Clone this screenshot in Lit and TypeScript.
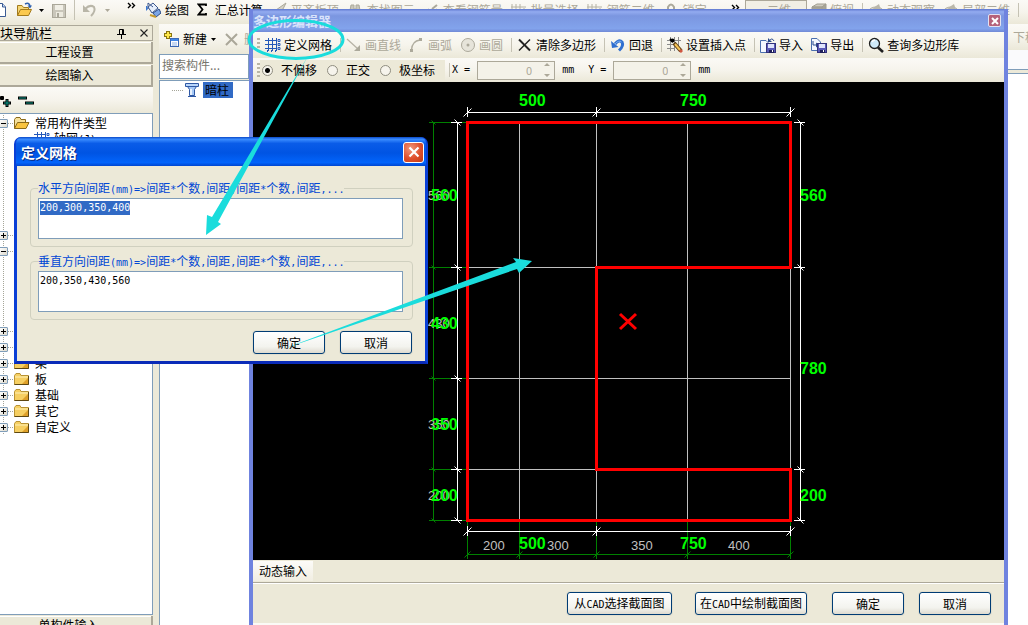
import { LitElement, html, svg, css, nothing } from "lit";
import { customElement, query } from "lit/decorators.js";
import { classMap } from "lit/directives/class-map.js";

/* ---------- shared look ---------- */

const base = css`
  * { box-sizing: border-box; }
  button, input, select, textarea, label, legend { font: inherit; color: inherit; }
  button { border: 0; background: none; padding: 0; margin: 0; }
  svg { display: block; flex: none; }
  .half { font-family: "DejaVu Sans Mono", monospace; font-size: 10px; white-space: pre; }
  .bar {
    display: flex;
    align-items: center;
    white-space: nowrap;
    background: linear-gradient(#fbfaf6, #f6f4ec 50%, #ebe8d8);
  }
  .tool { display: flex; align-items: center; gap: 3px; padding: 0 4px; flex: none; white-space: nowrap; }
  .tool:disabled { color: #aca899; }
  .sep { width: 1px; height: 14px; background: #c5c2b4; margin: 0 1px 0 4px; flex: none; }
  .grip { width: 3px; height: 14px; flex: none; background: repeating-linear-gradient(#b9b6a6 0 2px, transparent 2px 4px); }
  .push {
    height: 23px;
    border: 1px solid #003c74;
    border-radius: 3px;
    background: linear-gradient(#fff, #f3f3ee 70%, #dedbd0);
    color: #000;
    text-align: center;
    line-height: 20px;
    white-space: nowrap;
    box-shadow: 0 0 0 1px #e2dfcf;
  }
  .push.std { width: 72px; }
`;

/* Latin runs take half the width of a Chinese character. */
const mixed = (text: string) =>
  text.split(/([\x20-\x7e]+)/).map((part) =>
    /^[\x20-\x7e]+$/.test(part) ? html`<span class="half">${part}</span>` : part || nothing
  );

/* ---------- icons ---------- */

const box = (body: unknown, w = 16, h = 16) =>
  html`<svg width=${w} height=${h} viewBox="0 0 ${w} ${h}" aria-hidden="true">${body}</svg>`;

const disk = (x: number, y: number) => svg`
  <rect x=${x + 0.5} y=${y + 0.5} width="9" height="9" fill="#5a5ab8" stroke="#33337c"/>
  <rect x=${x + 2} y=${y + 1} width="6" height="4" fill="#dfe4fb"/>
  <rect x=${x + 3} y=${y + 7} width="5" height="3" fill="#20205a"/>
  <rect x=${x + 6} y=${y + 7} width="1" height="2" fill="#fff"/>`;

const icons = {
  doc: box(svg`<path d="M-6 1.500H2.500L5.500 5V14.500H-6Z" fill="#fff" stroke="#3a5a94"/><path d="M2.500 1.500V5H5.500" fill="#c9dbf5" stroke="#3a5a94"/>`, 7),
  open: box(svg`<path d="M1.500 13.500V3.500H6L7.500 5.500H12.500V8" fill="#f5d676" stroke="#a27a1c"/><path d="M1.500 13.500L4.500 7.500H15.500L12.500 13.500Z" fill="#fbc94f" stroke="#a27a1c"/><path d="M9 2Q13 0 14 4" fill="none" stroke="#2c5fae" stroke-width="1.500"/><path d="M11.500 3.500H16L14 6.500Z" fill="#2c5fae"/>`),
  save: box(svg`<rect x="1.500" y="2.500" width="13" height="13" fill="#c9c6ba" stroke="#aaa799"/><rect x="4" y="3" width="8" height="5" fill="#f1efe6"/><rect x="5" y="10" width="7" height="5" fill="#eceadf"/><rect x="6" y="11" width="2" height="4" fill="#aaa799"/>`),
  undoOff: box(svg`<path d="M3 7Q8 2 12 5Q14 9 9 14" fill="none" stroke="#b9b6a8" stroke-width="2"/><path d="M1 3V10H8Z" fill="#b9b6a8"/>`),
  undo: box(svg`<path d="M5 7Q9 2 12 5Q14 9 9 13.500" fill="none" stroke="#2f6fd0" stroke-width="3"/><path d="M5 7Q9 2.500 11.500 5" fill="none" stroke="#7eb0f0"/><path d="M1 4L2 11L8.500 10Z" fill="#2f6fd0"/>`),
  paint: box(svg`<path d="M3 5L8 1L13 6L7 11Z" fill="#e6eefb" stroke="#39548c"/><path d="M3 1V7M3 1L8 5" stroke="#39548c" fill="none"/><path d="M1 4V9L3 7L2 4Z" fill="#3d77cf"/><path d="M8 11L14 7L16 11L11 15Z" fill="#7ca6e6" stroke="#294a88"/><path d="M5 13L11 15" stroke="#c79a2c" stroke-width="2"/>`),
  sigma: box(svg`<path d="M9 4V2.500H1.500L5.500 7.500L1.500 12.500H9V11" fill="none" stroke="#000" stroke-width="1.800"/>`, 11),
  grid: box(svg`<path d="M3.500 1V14M7.500 1V14M11.500 1V14M0 3.500H12M0 7.500H12M0 11.500H12" stroke="#2458b8"/><path d="M13 2.500H15V4.500H13ZM13 6.500H15V8.500H13ZM13 10.500H15V12.500H13ZM2.500 13V15M6.500 13V15M10.500 13V15" stroke="#2458b8" fill="none"/>`),
  line: box(svg`<path d="M1 2L12 12" stroke="#b5b2a4" stroke-width="1.200"/><path d="M14 14H8L14 8Z" fill="#aca99b"/>`),
  arc: box(svg`<path d="M2.500 13Q3 4 11 3" fill="none" stroke="#b0ad9f" stroke-width="1.300"/><rect x="1" y="12" width="3" height="3" fill="#aca99b"/><rect x="10" y="1" width="3" height="3" fill="#aca99b"/>`),
  circle: box(svg`<circle cx="8" cy="8" r="6.500" fill="#e6e4da" stroke="#aca99b"/><circle cx="8" cy="8" r="1.500" fill="#aca99b"/>`),
  clear: box(svg`<path d="M2 2.500L13 13.500" stroke="#222" stroke-width="2"/><path d="M13 2.500L2 13.500" stroke="#222" stroke-width="1.500"/>`),
  insert: box(svg`<path d="M3.500 0V14M7.500 0V14M11.500 0V9M0 3.500H14M0 7.500H10M0 11.500H8" stroke="#8b8b8b"/><path d="M3 2L6 5" stroke="#000" stroke-width="2"/><circle cx="5.500" cy="3.500" r="2" fill="#000"/><path d="M7 6L14 14" stroke="#5c3d12" stroke-width="4"/><path d="M8 7L13 13" stroke="#f6c557" stroke-width="2"/><path d="M13 13L15 15" stroke="#cf5640" stroke-width="3"/>`),
  import: box(svg`<path d="M0.500 3.500H6L9.500 7V15.500H0.500Z" fill="#f4f8ff" stroke="#4b6fae"/>${disk(6, 6)}<path d="M9 4Q12 0 14 4" fill="none" stroke="#2a4a8c"/><path d="M8 1V5H12Z" fill="#2a4a8c"/>`),
  export: box(svg`<path d="M0.500 1.500H6L9.500 5V13.500H0.500Z" fill="#f4f8ff" stroke="#4b6fae"/><path d="M2 4V8H5" stroke="#2a4a8c" fill="none"/><path d="M5 5.500V10.500L8 8Z" fill="#2a4a8c"/>${disk(6, 6)}`),
  search: box(svg`<circle cx="6.500" cy="6.500" r="5" fill="#cfeaf9" stroke="#1f1f1f" stroke-width="1.300"/><path d="M4 5Q5 3 7 3" stroke="#fff" fill="none" stroke-width="1.500"/><path d="M10 10.500L15 15" stroke="#1f1f1f" stroke-width="2.600"/>`),
  create: box(svg`<path d="M5 0V8M1 4H9" stroke="#8a7510" stroke-width="4"/><path d="M5 1V7M2 4H8" stroke="#ffe84a" stroke-width="2"/><rect x="7.500" y="7.500" width="8" height="8" fill="#fff" stroke="#3a68b4"/><rect x="8" y="8" width="7" height="2" fill="#3f86e8"/><path d="M9 12H14M9 14H14" stroke="#8fb3e6"/>`),
  remove: box(svg`<path d="M2 3L13 14M13 3L2 14" stroke="#aaa799" stroke-width="2"/>`),
  column: box(svg`<path d="M1.500 1.500H14.500V4.500H1.500Z" fill="#b9d6fb" stroke="#2f58a4"/><path d="M3.500 4.500H12.500L10.500 7.500V13.500H5.500V7.500Z" fill="#a5c8f6" stroke="#2f58a4"/><path d="M7 7V13" stroke="#fff" stroke-width="1.500"/><path d="M4 14.500H12" stroke="#2f58a4"/>`),
  slab: box(svg`<path d="M1 13L5 8L15 1L12 7Z" fill="#d5d2c6" stroke="#aca99b"/>`),
  find: box(svg`<path d="M2 14L4 3H7V14ZM9 14V3H12L14 14Z" fill="#c9c6ba" stroke="#aca99b"/><path d="M7 7H9" stroke="#aca99b"/>`),
  rebar: box(svg`<path d="M2 12L6 7M9 7L14 3M11 12L14 7" stroke="#aca99b" stroke-width="2"/>`),
  mesh: box(svg`<path d="M1 2V14M5 2V14M9 2V14M0 5H15M0 9H15M13 6V12" stroke="#b5b2a4"/>`),
  lock: box(svg`<path d="M5 8V5Q8 0 11 5V8" fill="none" stroke="#aca99b" stroke-width="2"/><rect x="3" y="7" width="10" height="7" fill="#c9c6ba"/>`),
  cube: box(svg`<path d="M1 5L6 2H15L11 5Z" fill="#cfccc0" stroke="#a19e90"/><path d="M1 5H11V13H1ZM11 5L15 2V10L11 13" fill="#a8a598" stroke="#a19e90"/>`),
  orbit: box(svg`<ellipse cx="8" cy="9" rx="7" ry="4" fill="#d9d6ca" stroke="#b5b2a4"/><path d="M5 6L11 2L13 8L8 12Z" fill="#bab7aa"/>`),
  pin: box(svg`<path d="M3.500 1.500H7.500V6.500H3.500ZM6.500 1.500V6M1 6.500H10M5.500 7V11" fill="none" stroke="#000"/>`, 11, 11),
  shut: box(svg`<path d="M1.500 1.500L8.500 8.500M8.500 1.500L1.500 8.500" stroke="#222" stroke-width="1.100"/>`, 10, 10),
  folder: box(svg`<path d="M0.500 11.500V2.500L2 0.500H6L7 2.500H14.500V11.500Z" fill="#f6cf62" stroke="#b99334"/><path d="M1 4H14" stroke="#fdf0b8"/><path d="M0.500 11.500H14.500V3" fill="none" stroke="#5d4712"/><path d="M8 11L14 5V11Z" fill="#dea02a"/>`, 15, 13),
  folderOpen: box(svg`<path d="M0.500 11.500V2.500L2 0.500H6L7 2.500H11.500V5" fill="#f6e09a" stroke="#8a6a1a"/><path d="M0.500 11.500L3.500 5.500H15L12 11.500Z" fill="#f9c440" stroke="#8a6a1a"/>`, 16, 13),
  caret: box(svg`<path d="M0 0H5L2.500 3Z" fill="currentColor"/>`, 5, 3),
  chevrons: box(svg`<path d="M1 1L3.500 3.500L1 6M5 1L7.500 3.500L5 6" fill="none" stroke="#000" stroke-width="1.400"/>`, 9, 7),
};

/* ---------- drawing area ---------- */

@customElement("section-canvas")
class SectionCanvas extends LitElement {
  static styles = [base, css`
    :host { display: block; background: #000; overflow: hidden; }
    .major { font: bold 16px "Liberation Sans", sans-serif; fill: #0f0; }
    .minor { font: 13px "Liberation Sans", sans-serif; fill: #c0c0c0; }
    .grid { stroke: #c0c0c0; }
    .ext { stroke: #008000; }
    .dim { stroke: #fff; }
    .outline { fill: none; stroke: #f00; stroke-width: 3; }
  `];

  private xs = [467, 519, 596, 687, 790];
  private ys = [122, 267, 378, 469, 520];

  private hLine(x1: number, x2: number, y: number, cls: string) {
    return svg`<line class=${cls} x1=${x1} x2=${x2} y1=${y + 0.5} y2=${y + 0.5}/>`;
  }
  private vLine(x: number, y1: number, y2: number, cls: string) {
    return svg`<line class=${cls} x1=${x + 0.5} x2=${x + 0.5} y1=${y1} y2=${y2}/>`;
  }
  private slash(x: number, y: number, dir: 1 | -1, r: number, cls: string) {
    return svg`<line class=${cls} x1=${x + 0.5 - r} y1=${y + 0.5 - r * dir} x2=${x + 0.5 + r} y2=${y + 0.5 + r * dir}/>`;
  }
  private rowDim(y: number) {
    return svg`${this.hLine(467, 791, y, "dim")}
      ${[467, 596, 790].map((x) => svg`${this.vLine(x, y - 5, y + 5, "dim")}${this.slash(x, y, -1, 4, "dim")}`)}`;
  }
  private colDim(x: number, stops: number[]) {
    return svg`${this.vLine(x, 122, 521, "dim")}
      ${stops.map((y) => svg`${this.hLine(x - 6, x + 5, y, "dim")}${this.slash(x, y, 1, 3, "dim")}`)}`;
  }
  private text(cls: string, items: [number, number, number][]) {
    return items.map(([n, x, y]) => svg`<text class=${cls} x=${x} y=${y}>${n}</text>`);
  }

  render() {
    const { xs, ys } = this;
    return html`<svg width="751" height="478" viewBox="253 82 751 478" role="img" aria-label="截面图">
      ${xs.slice(1).map((x) => this.vLine(x, 122, 520, "grid"))}
      ${ys.slice(1, 4).map((y) => this.hLine(467, 790, y, "grid"))}
      ${ys.map((y) => svg`${this.hLine(429, 467, y, "ext")}${this.slash(433, y, 1, 2, "ext")}`)}
      ${this.vLine(433, 122, 520, "ext")}
      ${xs.map((x) => svg`${this.vLine(x, 521, 559, "ext")}${this.slash(x, 554, -1, 3, "ext")}`)}
      ${this.hLine(467, 790, 554, "ext")}
      ${this.text("minor", [[560, 428, 200], [430, 428, 328], [350, 428, 429], [200, 428, 500],
        [200, 483, 550], [300, 547, 550], [350, 631, 550], [400, 728, 550]])}
      ${this.rowDim(112)}${this.rowDim(531)}
      ${this.colDim(457, ys)}${this.colDim(800, [122, 267, 469, 520])}
      ${this.text("major", [[500, 519, 106], [750, 680, 106], [500, 519, 549], [750, 680, 549],
        [560, 431, 201], [430, 431, 329], [350, 431, 430], [200, 431, 501],
        [560, 800, 201], [780, 800, 374], [200, 800, 501]])}
      <path class="outline" d="M467.500 122.500H790.500V267.500H596.500V469.500H790.500V520.500H467.500Z"/>
      <path class="outline" d="M620 314L636 329M636 314L620 329"/>
    </svg>`;
  }
}

/* ---------- polygon editor window ---------- */

@customElement("polygon-editor")
class PolygonEditor extends LitElement {
  static styles = [base, css`
    :host {
      display: flex;
      flex-direction: column;
      border: solid #6f83df;
      border-width: 0 4px;
      background: #ece9d8;
    }
    .title {
      height: 23px;
      flex: none;
      display: flex;
      align-items: center;
      justify-content: space-between;
      padding-right: 3px;
      background: linear-gradient(#5f78cf, #93abf0 12%, #7b96e0 30%, #82a3ec 85%, #7189d6);
      color: #d9e3fb;
      font-size: 13px;
      font-weight: bold;
    }
    .close {
      width: 13px;
      height: 13px;
      display: grid;
      place-items: center;
      border: 1px solid #e3e2f2;
      border-radius: 2px;
      background: #b5627a;
    }
    .tools { height: 26px; flex: none; padding-left: 4px; }
    .grid-tool { padding-left: 5px; }
    .modes { height: 24px; flex: none; padding-left: 4px; }
    .radios { display: flex; align-items: center; gap: 10px; height: 20px; padding: 0 10px 0 2px; background: #ece9d8; }
    .radio { display: flex; align-items: center; gap: 8px; }
    .radio input {
      appearance: none;
      width: 11px;
      height: 11px;
      margin: 0;
      border: 1px solid #8f8d80;
      border-radius: 50%;
      background: #f6f4ec;
    }
    .radio input:checked { background: radial-gradient(#000 0 2px, #f6f4ec 3px); }
    .axis { display: flex; align-items: center; gap: 7px; padding: 0 13px 0 1px; }
    .spin { display: flex; align-items: center; width: 78px; height: 19px; padding-right: 4px; border: 1px solid #aca899; background: #f4f2e9; color: #aca899; }
    .spin input {
      appearance: textfield;
      flex: 1;
      min-width: 0;
      border: 0;
      padding: 0 12px 0 0;
      background: none;
      color: #aca899;
      text-align: right;
      font-size: 11px;
    }
    section-canvas { flex: 1; min-height: 0; }
    .status { height: 23px; flex: none; padding: 1px 1px 2px 0; border-bottom: 1px solid #aca899; }
    .tab { height: 20px; padding: 0 6px; background: linear-gradient(#fcfbf8, #f1eee2); }
    .foot { height: 40px; flex: none; display: flex; align-items: center; justify-content: flex-end; padding: 0 13px 0 0; border-top: 1px solid #fff; gap: 23px; }
    .pair { display: flex; gap: 15px; margin-left: 2px; }
    .wide { padding: 0 4px; min-width: 105px; }
    .strip { height: 2px; flex: none; background: #fbfaf6; }
  `];

  private tool(icon: unknown, label: string, off = false) {
    return html`<button class="tool" ?disabled=${off}>${icon}${label}</button>`;
  }
  private axis(name: string) {
    return html`<span class="axis">
      <label for=${name} class="half">${name} =</label>
      <span class="spin"><input id=${name} type="text" inputmode="numeric" value="0" disabled />
        ${box(svg`<path d="M0 4H6L3 1ZM0 12H6L3 15Z" fill="#aca899"/>`, 6)}</span>
      <span class="half">mm</span></span>`;
  }

  render() {
    const sep = html`<span class="sep"></span>`;
    return html`
      <div class="title"><span>多边形编辑器</span>
        <button class="close" aria-label="关闭">${box(svg`<path d="M1 1L7 7M7 1L1 7" stroke="#fff" stroke-width="2"/>`, 8, 8)}</button>
      </div>
      <div class="bar tools"><span class="grip"></span>
        <button class="tool grid-tool">${icons.grid}定义网格</button>${sep}
        ${this.tool(icons.line, "画直线", true)}${this.tool(icons.arc, "画弧", true)}${this.tool(icons.circle, "画圆", true)}${sep}
        ${this.tool(icons.clear, "清除多边形")}${sep}${this.tool(icons.undo, "回退")}${sep}
        ${this.tool(icons.insert, "设置插入点")}${sep}
        ${this.tool(icons.import, "导入")}${this.tool(icons.export, "导出")}${sep}
        ${this.tool(icons.search, "查询多边形库")}
      </div>
      <div class="bar modes"><span class="grip"></span>
        <span class="radios">${["不偏移", "正交", "极坐标"].map((t, i) => html`
          <label class="radio"><input type="radio" name="mode" .checked=${i === 0} />${t}</label>`)}</span>
        <span class="sep"></span>${this.axis("X")}${this.axis("Y")}
      </div>
      <section-canvas></section-canvas>
      <div class="status"><button class="tab">动态输入</button></div>
      <div class="foot">
        <button class="push wide">${mixed("从CAD选择截面图")}</button>
        <button class="push wide">${mixed("在CAD中绘制截面图")}</button>
        <span class="pair"><button class="push std">确定</button><button class="push std">取消</button></span>
      </div>
      <div class="strip"></div>`;
  }
}

/* ---------- grid definition dialog ---------- */

@customElement("grid-dialog")
class GridDialog extends LitElement {
  static styles = [base, css`
    :host {
      display: block;
      border: 3px solid #0a3fd6;
      border-top: 0;
      border-bottom-color: #0a2bb8;
      border-radius: 7px 7px 0 0;
      background: #0a50e0;
    }
    .title {
      height: 29px;
      display: flex;
      align-items: center;
      justify-content: space-between;
      padding: 1px 2px 0 5px;
      margin: 0 -1px;
      border-radius: 6px 6px 0 0;
      background: linear-gradient(#0a49c8, #3a8cff 8%, #0a5ce8 22%, #0054e3 55%, #0264fb 88%, #0046d0);
      color: #fff;
      font-size: 14px;
      font-weight: bold;
      text-shadow: 1px 1px #0a2a80;
    }
    .close {
      width: 21px;
      height: 21px;
      display: grid;
      place-items: center;
      border: 1px solid #fff;
      border-radius: 3px;
      background: radial-gradient(circle at 35% 30%, #f0987c, #df4f2c 55%, #c13a14);
    }
    .body { background: #ece9d8; padding: 15px 12px 7px 13px; }
    fieldset { margin: 0 0 7px; padding: 3px 9px 7px 7px; border: 1px solid #d0d0bf; border-radius: 4px; min-width: 0; }
    legend { display: block; padding: 0; height: 14px; line-height: 14px; color: #0046d5; white-space: nowrap; }
    textarea {
      display: block;
      width: 100%;
      height: 41px;
      resize: none;
      outline: 0;
      margin: 0;
      padding: 2px 1px;
      border: 1px solid #7f9db9;
      border-radius: 0;
      background: #fff;
      color: #000;
      font: 10px/14px "DejaVu Sans Mono", monospace;
      overflow: hidden;
    }
    textarea::selection { background: #316ac5; color: #fff; }
    .actions { display: flex; justify-content: flex-end; gap: 15px; padding: 4px 1px 0 0; }
  `];

  @query("#across") private across!: HTMLTextAreaElement;

  firstUpdated() {
    this.across.focus();
    this.across.select();
  }

  private field(id: string, name: string, value: string) {
    return html`<fieldset>
      <legend><label for=${id}>${mixed(`${name}方向间距(mm)=>间距*个数,间距,间距*个数,间距,...`)}</label></legend>
      <textarea id=${id} spellcheck="false" .value=${value}></textarea>
    </fieldset>`;
  }

  render() {
    return html`
      <div class="title"><span>定义网格</span>
        <button class="close" aria-label="关闭">${box(svg`<path d="M1.500 1.500L10.500 10.500M10.500 1.500L1.500 10.500" stroke="#fff" stroke-width="2.200"/>`, 12, 12)}</button>
      </div>
      <div class="body">
        ${this.field("across", "水平", "200,300,350,400")}
        ${this.field("down", "垂直", "200,350,430,560")}
        <div class="actions"><button class="push std">确定</button><button class="push std">取消</button></div>
      </div>`;
  }
}

/* ---------- whole desktop ---------- */

type Row = { open?: boolean; mark?: boolean; label?: string; child?: boolean };

const rows: Row[] = [
  { mark: true, open: true, label: "常用构件类型" },
  { child: true, label: "轴网(J)" },
  {}, {}, {}, {}, {},
  { mark: true }, { mark: true, open: true },
  {}, {}, {}, {},
  { mark: true }, { mark: true },
  { mark: true, label: "梁" },
  { mark: true, label: "板" },
  { mark: true, label: "基础" },
  { mark: true, label: "其它" },
  { mark: true, label: "自定义" },
];

@customElement("app-root")
class AppRoot extends LitElement {
  static styles = [base, css`
    :host {
      display: flex;
      flex-direction: column;
      position: relative;
      height: 100vh;
      overflow: hidden;
      background: #ece9d8;
      color: #000;
      font: 12px/16px "Noto Sans CJK SC", sans-serif;
    }
    .main-bar { height: 24px; flex: none; padding-bottom: 4px; }
    .group { display: flex; align-items: center; flex: none; }
    .files { width: 141px; gap: 7px; }
    .files .sep { margin: 0; height: 20px; }
    .faded { color: #aca899; }
    .folder-tool { margin-left: 2px; }
    .more { margin-left: auto; padding: 0 5px; align-self: flex-start; margin-top: 2px; }
    .edit { width: 604px; }
    .edit .tool { gap: 4px; }
    .view { flex: 1; }
    select { appearance: none; width: 62px; height: 20px; padding: 0 0 0 21px; border: 1px solid #aca899; border-radius: 0; background: #f1efe5; color: #aca899; opacity: 1; }
    .work { flex: 1; min-height: 0; display: grid; grid-template-columns: 153px 90px 1fr; column-gap: 6px; }
    .nav { display: flex; flex-direction: column; min-height: 0; padding-top: 1px; }
    .nav-head { display: flex; align-items: center; height: 16px; gap: 12px; border: 1px solid #aca899; border-left: 0; padding-right: 3px; font-size: 13px; }
    .nav-head span { flex: 1; }
    .page { height: 22px; flex: none; margin-top: 1px; padding-right: 12px; border: solid #aca899; border-width: 0 2px 2px 0; box-shadow: inset 0 1px #fff; background: #ece9d8; text-align: center; line-height: 18px; }
    .expand { height: 26px; flex: none; padding-top: 2px; }
    .tree { position: relative; flex: 1; min-height: 0; margin: 0; padding: 1px 0 0; list-style: none; background: #fff; border: 1px solid #7f9db9; border-left: 0; overflow: hidden; }
    .row { display: flex; align-items: center; height: 16px; background: repeating-linear-gradient(#a5a598 0 1px, transparent 1px 2px) 3px 0 / 1px 100% no-repeat; }
    .mark { width: 9px; height: 9px; margin-left: -1px; flex: none; border: 1px solid #7f9db9; border-radius: 1px; background: linear-gradient(135deg, #fff, #dcd8cb); }
    .dots { width: 6px; height: 1px; background: repeating-linear-gradient(90deg, #a5a598 0 1px, transparent 1px 2px); flex: none; }
    .dots.long { width: 11px; }
    .name { margin-left: 6px; }
    .open .name { margin-left: 5px; }
    .child { padding-left: 34px; }
    .child .name { margin-left: 4px; }
    .last { margin-top: 1px; padding-right: 14px; height: 9px; line-height: 18px; overflow: hidden; border-bottom: 0; }
    .parts { display: flex; flex-direction: column; min-height: 0; }
    .parts-bar { height: 30px; flex: none; }
    .parts-bar .tool { gap: 4px; }
    .search { height: 25px; flex: none; margin: 0 0 1px; border: 1px solid #7f9db9; border-radius: 0; padding: 0 2px 5px; width: 100%; background: #fff; outline: 0; }
    .search::placeholder { color: #77756c; opacity: 1; }
    .list { flex: 1; min-height: 0; margin: 0; padding: 1px 0 0 12px; list-style: none; border: 1px solid #7f9db9; border-width: 1px 0 0 1px; background: #fff; overflow: hidden; }
    .item { display: flex; align-items: center; gap: 1px; }
    .picked { margin-left: 2px; padding: 0 4px 0 2px; background: #316ac5; }
    .side { display: flex; flex-direction: column; min-width: 0; }
    .side-bar { height: 26px; flex: none; justify-content: flex-end; }
    .side-bar .tool { width: 15px; padding: 0; overflow: hidden; }
    .side-gap { height: 19px; flex: none; background: #fafafc; }
    .side-view { flex: 1; border-top: 1px solid #7f9db9; background: linear-gradient(#ece9d8 3px, #7f9db9 3px 4px, #fff 4px); }
    polygon-editor { position: absolute; left: 249px; right: 20px; top: 9px; bottom: 0; }
    grid-dialog { position: absolute; left: 14px; top: 137px; width: 414px; }
    .notes { position: absolute; left: 0; top: 0; pointer-events: none; }
  `];

  private row(r: Row) {
    const cls = classMap({ row: true, child: !!r.child, open: !!r.open });
    return html`<li class=${cls}>
      ${r.mark ? html`<span class="mark">${box(svg`<path d=${r.open ? "M1 3.500H6" : "M1 3.500H6M3.500 1V6"} stroke="#000"/>`, 7, 7)}</span>
        <span class="dots"></span>${r.open ? icons.folderOpen : icons.folder}` : nothing}
      ${r.child ? icons.grid : nothing}
      ${r.label ? html`<span class="name">${mixed(r.label)}</span>` : nothing}
    </li>`;
  }

  private off(icon: unknown, label: string) {
    return html`<button class="tool" disabled>${icon}${label}</button>`;
  }

  render() {
    return html`
      <div class="bar main-bar">
        <div class="group files">
          ${icons.doc}<span class="folder-tool">${icons.open}</span>${icons.caret}${icons.save}
          <span class="sep"></span>${icons.undoOff}<span class="faded">${icons.caret}</span>
          <button class="more" aria-label="更多">${icons.chevrons}</button>
        </div>
        <div class="group edit">
          <button class="tool">${icons.paint}绘图</button>
          <button class="tool">${icons.sigma}&nbsp;汇总计算</button>
          ${this.off(icons.slab, "平齐板顶")}${this.off(icons.find, "查找图元")}${this.off(icons.rebar, "查看钢筋量")}
          ${this.off(icons.mesh, "批量选择")}${this.off(icons.mesh, "钢筋二维")}${this.off(icons.lock, "锁定")}
          <button class="more" aria-label="更多">${icons.chevrons}</button>
        </div>
        <div class="group view">
          <select disabled aria-label="视图"><option>二维</option></select>
          ${this.off(icons.cube, "俯视")}<span class="sep"></span>
          ${this.off(icons.orbit, "动态观察")}${this.off(icons.orbit, "局部二维")}<span class="sep"></span>
        </div>
      </div>
      <div class="work">
        <div class="nav">
          <div class="nav-head"><span>块导航栏</span>${icons.pin}${icons.shut}</div>
          <button class="page">工程设置</button>
          <button class="page">绘图输入</button>
          <div class="bar expand">${box(svg`
            <path d="M0 5H4M2 3V7M3 10H11M7 6V14" stroke="#000" stroke-width="3"/><path d="M4 10H10M7 7V13" stroke="#0b9a8a"/>
            <path d="M18 5H27M25 10H34" stroke="#000" stroke-width="3"/><path d="M19 5H26M26 10H33" stroke="#0b9a8a"/>`, 36)}</div>
          <ul class="tree">${rows.map((r) => this.row(r))}</ul>
          <button class="page last">单构件输入</button>
        </div>
        <div class="parts">
          <div class="bar parts-bar">
            <button class="tool">${icons.create}新建${icons.caret}</button>
            ${this.off(icons.remove, "删除")}
          </div>
          <input class="search" type="text" aria-label="搜索构件" placeholder="搜索构件..." />
          <ul class="list"><li class="item"><span class="dots long"></span>${icons.column}<span class="picked">暗柱</span></li></ul>
        </div>
        <div class="side">
          <div class="bar side-bar">${this.off(nothing, "下移")}</div>
          <div class="side-gap"></div>
          <div class="side-view"></div>
        </div>
      </div>
      <polygon-editor></polygon-editor>
      <grid-dialog></grid-dialog>
      <svg class="notes" width="560" height="370" viewBox="0 0 560 370" aria-hidden="true">
        <ellipse cx="296" cy="39.500" rx="47" ry="19" fill="none" stroke="#1adcdc" stroke-width="3"/>
        <path fill="#1adcdc" d="M308 56L212 217L207 215L206 235L221 224L218 222Z"/>
        <path fill="#1adcdc" d="M283 349L516 262L513 258L532 261L519 273L517 269Z"/>
      </svg>`;
  }
}
